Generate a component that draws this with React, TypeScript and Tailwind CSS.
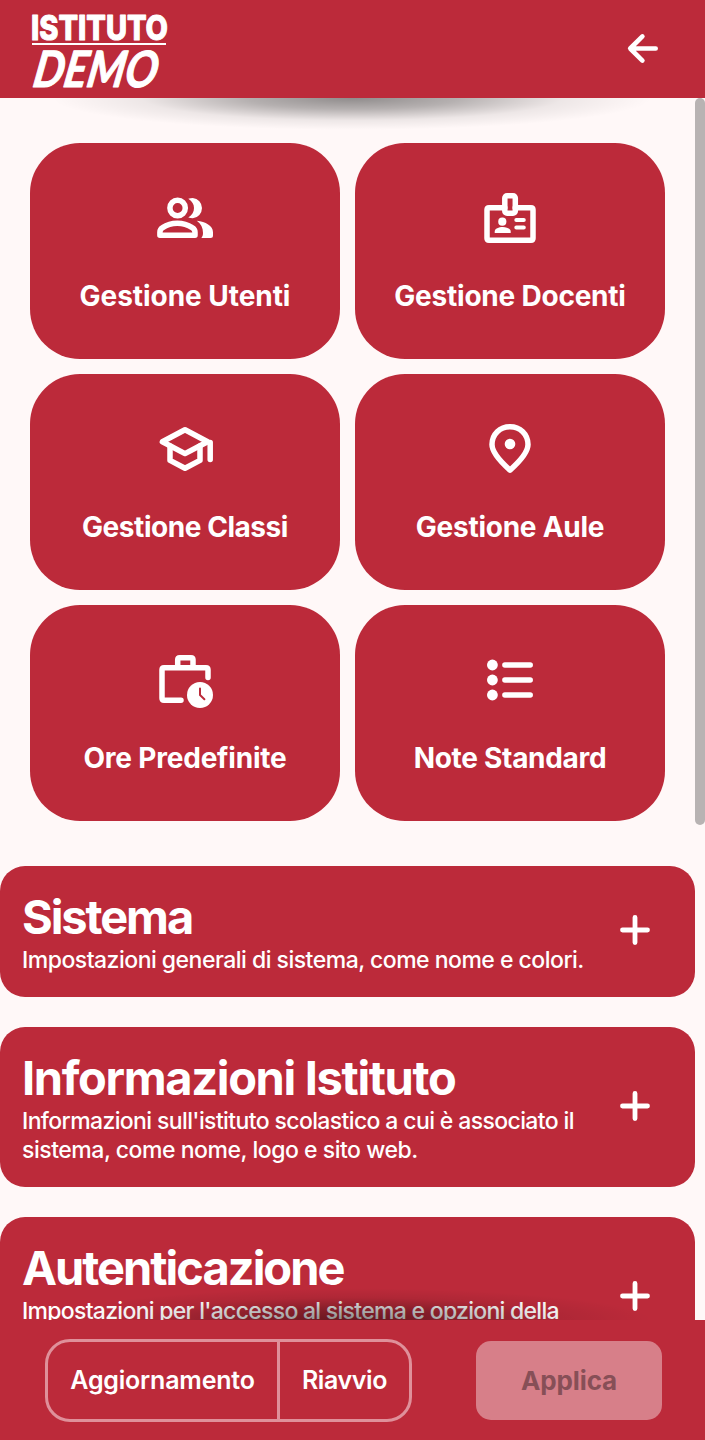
import type { ReactNode } from "react";

function TileIcon({ children }: { children: ReactNode }) {
  return (
    <svg
      viewBox="0 0 60 60"
      className="h-[60px] w-[60px]"
      fill="none"
      stroke="white"
      strokeWidth="5.5"
      strokeLinecap="round"
      strokeLinejoin="round"
    >
      {children}
    </svg>
  );
}

const UsersIcon = (
  <TileIcon>
    <circle cx="22.6" cy="20" r="7.7" />
    <path d="M33.3 10.7C34.8 10.2 36.3 9.9 37.8 9.9A10.2 10.2 0 0 1 37.8 30.2C36.3 30.2 34.8 29.9 33.3 29.4C37.2 27 39 23.8 39 20C39 16.3 37.2 13.1 33.3 10.7Z" fill="white" stroke="none" />
    <path d="M4.9 47.3V44.2Q4.9 41.2 7.6 39.6Q14 35.3 22.3 35.3T37.2 39.6Q40 41.2 40 44.2V47.3Z" />
    <path d="M41.8 32.8C50.5 33.8 58 37.8 58 44.2V47.5Q58 50 55.5 50H46.4C47.5 48.5 48 47 48 45C48 40 46 35.8 41.8 32.8Z" fill="white" stroke="none" />
  </TileIcon>
);

const BadgeIcon = (
  <TileIcon>
    <path d="M24.8 19.8H9Q7 19.8 7 21.8V50.3Q7 52.3 9 52.3H51Q53 52.3 53 50.3V21.8Q53 19.8 51 19.8H35.2" />
    <rect x="24.8" y="7.7" width="10.5" height="17.6" rx="2.3" />
    <circle cx="22.3" cy="33.7" r="4.1" fill="white" stroke="none" />
    <path d="M14.7 45V43.5C14.7 40.5 18.8 39 22.7 39S30.7 40.5 30.7 43.5V45Z" fill="white" stroke="none" />
    <path d="M36.3 32H43.8M36.3 39.4H43.8" strokeWidth="4" />
  </TileIcon>
);

const SchoolIcon = (
  <TileIcon>
    <path d="M7.4 22.7L30 10.7L52.6 22.7L30 34.6Z" />
    <path d="M15 27V41.4L30 49.3L45 41.4V27M55.2 23.5V40.4" />
  </TileIcon>
);

const PinIcon = (
  <TileIcon>
    <path d="M30 51.2C18 40.5 12 32.5 12 25.6C12 15 20 7.7 30 7.7S48 15 48 25.6C48 32.5 42 40.5 30 51.2Z" />
    <circle cx="30" cy="25" r="5.3" fill="white" stroke="none" />
  </TileIcon>
);

const HoursIcon = (
  <TileIcon>
    <path d="M26 50.3H9Q7 50.3 7 48.3V19.7Q7 17.7 9 17.7H51Q53 17.7 53 19.7V27.6" />
    <path d="M22.7 17.7V9.7Q22.7 7.7 24.7 7.7H36Q38 7.7 38 9.7V17.7" strokeLinecap="butt" />
    <circle cx="45" cy="45" r="13" fill="white" stroke="none" />
    <path d="M45 38.4V45L49.4 49.2" stroke="#bc2a3a" strokeWidth="2" />
  </TileIcon>
);

const ListIcon = (
  <TileIcon>
    <path d="M24.9 15H50.2M24.9 30H50.2M24.9 45H50.2" />
    <g fill="white" stroke="none">
      <circle cx="12.4" cy="15" r="5.4" />
      <circle cx="12.4" cy="30" r="5.4" />
      <circle cx="12.4" cy="45" r="5.4" />
    </g>
  </TileIcon>
);

const tiles = [
  { label: "Gestione Utenti", icon: UsersIcon, spacing: "tracking-[-0.05px]" },
  { label: "Gestione Docenti", icon: BadgeIcon, spacing: "tracking-[-0.22px]" },
  { label: "Gestione Classi", icon: SchoolIcon, spacing: "tracking-[-0.45px]" },
  { label: "Gestione Aule", icon: PinIcon, spacing: "tracking-[-0.25px]" },
  { label: "Ore Predefinite", icon: HoursIcon, spacing: "tracking-[-0.2px]" },
  { label: "Note Standard", icon: ListIcon, spacing: "tracking-[-0.3px]" },
];

const sections = [
  {
    title: "Sistema",
    spacing: "tracking-[-2.1px]",
    height: "h-[131px]",
    lines: [
      { text: "Impostazioni generali di sistema, come nome e colori.", spacing: "tracking-[-0.51px]" },
    ],
  },
  {
    title: "Informazioni Istituto",
    spacing: "tracking-[-1.35px]",
    height: "h-[160px]",
    lines: [
      { text: "Informazioni sull'istituto scolastico a cui è associato il", spacing: "tracking-[-0.62px]" },
      { text: "sistema, come nome, logo e sito web.", spacing: "tracking-[-0.47px]" },
    ],
  },
  {
    title: "Autenticazione",
    spacing: "tracking-[-2px]",
    height: "h-[160px]",
    lines: [
      { text: "Impostazioni per l'accesso al sistema e opzioni della", spacing: "tracking-[-0.71px]" },
    ],
  },
];

function Logo() {
  return (
    <svg width="140" height="80" viewBox="30 12 140 80" fill="white" stroke="white" strokeLinejoin="round">
      <text x="31" y="40" fontFamily="Inter, sans-serif" fontSize="33.5" fontWeight="800" strokeWidth="1" textLength="137" lengthAdjust="spacingAndGlyphs">
        ISTITUTO
      </text>
      <rect x="32" y="43" width="134" height="2" stroke="none" />
      <text x="31.5" y="87.5" transform="translate(15.5 0) skewX(-10)" fontFamily="Lato, sans-serif" fontSize="50" fontStyle="italic" fontWeight="700" strokeWidth="1" textLength="124" lengthAdjust="spacingAndGlyphs">
        DEMO
      </text>
    </svg>
  );
}

export default function App() {
  return (
    <div className="flex h-[1440px] w-[705px] flex-col overflow-hidden bg-[#fff8f8] font-['Inter',sans-serif] text-white">
      <header className="flex h-[98px] shrink-0 items-center justify-between bg-[#bc2a3a] pl-[30px] pr-[43px]">
        <div className="pt-1.5">
          <Logo />
        </div>
        <svg width="38" height="38" viewBox="0 0 38 38" fill="none" stroke="white" strokeWidth="4.6" strokeLinecap="round" strokeLinejoin="round">
          <path d="M31.7 18.5H6.5M18.4 6.4L6.2 18.5L18.4 30.6" />
        </svg>
      </header>

      <main className="relative flex h-[1222px] shrink-0 overflow-hidden">
        <div className="w-[695px] shrink-0">
          <div className="grid grid-cols-2 gap-[15px] px-[30px] py-[45px]">
            {tiles.map((tile) => (
              <div key={tile.label} className="flex h-[216px] flex-col items-center rounded-[50px] bg-[#bc2a3a] pt-[45px]">
                {tile.icon}
                <span className={`mt-[30px] whitespace-nowrap text-[28px] font-bold leading-[36px] ${tile.spacing}`}>
                  {tile.label}
                </span>
              </div>
            ))}
          </div>
          <div className="flex flex-col gap-[30px]">
            {sections.map((section) => (
              <section
                key={section.title}
                className={`flex items-center justify-between rounded-[25px] bg-[#bc2a3a] pl-[22px] pr-[45px] ${section.height}`}
              >
                <div className="self-start pt-[22px]">
                  <h2 className={`whitespace-nowrap text-[47px] font-bold leading-[58px] ${section.spacing}`}>{section.title}</h2>
                  {section.lines.map((line) => (
                    <p key={line.text} className={`whitespace-nowrap text-[23px] font-medium leading-[29px] ${line.spacing}`}>
                      {line.text}
                    </p>
                  ))}
                </div>
                <svg className="mb-[3px]" width="30" height="30" viewBox="0 0 30 30" stroke="white" strokeWidth="4.8" strokeLinecap="round">
                  <path d="M2.5 15H27.5M15 2.5V27.5" />
                </svg>
              </section>
            ))}
          </div>
        </div>
        <div className="h-[727px] w-2.5 rounded-[5px] bg-[#b8b3b3]" />
        <div className="pointer-events-none absolute inset-x-0 top-0 h-[34px] bg-[radial-gradient(ellipse_300px_32px_at_352px_0px,rgba(0,0,0,0.44),rgba(0,0,0,0.29)_35%,rgba(0,0,0,0.07)_70%,transparent)]" />
        <div className="pointer-events-none absolute inset-x-0 bottom-0 h-[34px] bg-[radial-gradient(ellipse_300px_32px_at_352px_34px,rgba(0,0,0,0.46),rgba(0,0,0,0.29)_35%,rgba(0,0,0,0.07)_70%,transparent)]" />
      </main>

      <footer className="flex h-[120px] shrink-0 items-center justify-between bg-[#bc2a3a] pl-[45px] pr-[43px] pt-px">
        <div className="flex h-[83px] w-[367px] rounded-[25px] border-[3px] border-[#df909a] text-[25px] font-semibold">
          <div className="flex w-[232px] items-center justify-center border-r-[3px] border-[#df909a] pt-px tracking-[-0.2px]">Aggiornamento</div>
          <div className="flex flex-1 items-center justify-center pt-px tracking-[-0.4px]">Riavvio</div>
        </div>
        <div className="flex h-[79px] w-[186px] items-center justify-center rounded-[15px] bg-[#d77f89] pb-px text-[26px] font-bold tracking-[-0.1px] text-[#874f57]">
          Applica
        </div>
      </footer>
    </div>
  );
}
